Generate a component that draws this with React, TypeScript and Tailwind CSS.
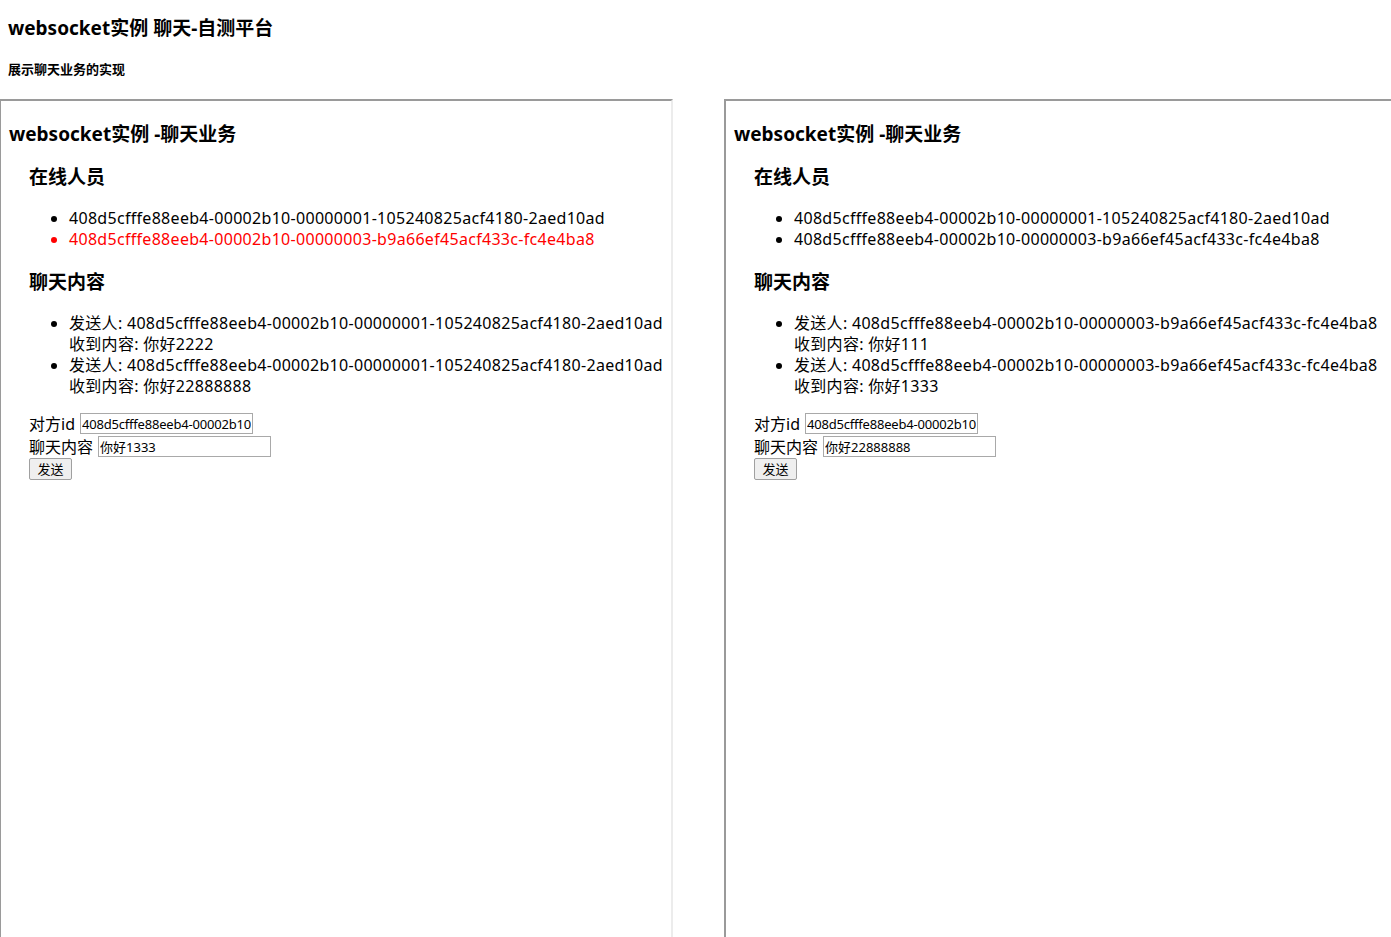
import React from 'react'

type Msg = { from: string; text: string }

interface PanelProps {
  online: { id: string; self?: boolean }[]
  messages: Msg[]
  targetId: string
  draft: string
}

const ID1 = '408d5cfffe88eeb4-00002b10-00000001-105240825acf4180-2aed10ad'
const ID3 = '408d5cfffe88eeb4-00002b10-00000003-b9a66ef45acf433c-fc4e4ba8'

function ChatPanel({ online, messages, targetId, draft }: PanelProps) {
  return (
    <div className="w-[674px] h-[860px] shrink-0 border-2 border-t-[#9a9a9a] border-l-[#9a9a9a] border-r-[#ececec] border-b-[#ececec] bg-white overflow-hidden">
      <div className="pl-[8px] pt-[21px]">
        <h3 className="text-[19px] leading-[25px] font-bold">websocket实例 -聊天业务</h3>
        <div className="pl-[20px]">
          {/* 在线人员 */}
          <h3 className="mt-[18px] text-[19px] leading-[25px] font-bold">在线人员</h3>
          <ul className="mt-[18px] list-disc pl-[40px] text-[16px] leading-[21px] tracking-[0.3px] whitespace-nowrap">
            {online.map((u) => (
              <li key={u.id} className={u.self ? 'text-[#ff0000]' : ''}>
                {u.id}
              </li>
            ))}
          </ul>

          {/* 聊天内容 */}
          <h3 className="mt-[20px] text-[19px] leading-[25px] font-bold">聊天内容</h3>
          <ul className="mt-[18px] list-disc pl-[40px] text-[16px] leading-[21px] tracking-[0.3px] whitespace-nowrap">
            {messages.map((m, i) => (
              <li key={i}>
                发送人: {m.from}
                <br />
                收到内容: {m.text}
              </li>
            ))}
          </ul>

          <div className="mt-[15px] text-[16px]">
            <div className="flex items-center h-[23px]">
              <span>对方id</span>
              <input
                readOnly
                value={targetId}
                className="ml-[5px] w-[173px] h-[21px] border border-[#a9a9a9] px-[1px] text-[13px] tracking-[-0.2px] outline-none"
              />
            </div>
            <div className="flex items-center h-[23px]">
              <span>聊天内容</span>
              <input
                readOnly
                value={draft}
                className="ml-[5px] w-[173px] h-[21px] border border-[#a9a9a9] px-[1px] text-[13px] outline-none"
              />
            </div>
            <button className="block w-[43px] h-[22px] border border-[#a0a0a0] rounded-[2px] bg-[#efefef] text-[13px] leading-none">
              发送
            </button>
          </div>
        </div>
      </div>
    </div>
  )
}

export default function App() {
  return (
    <div
      className="w-[1391px] h-[937px] overflow-hidden bg-white text-black"
      style={{ fontFamily: '"Noto Sans", "Noto Sans CJK SC", sans-serif' }}
    >
      <div className="px-[8px] pt-[16px]">
        <h2 className="text-[19px] leading-[25px] font-bold">websocket实例 聊天-自测平台</h2>
        <h5 className="mt-[20px] text-[13px] leading-[17px] font-bold">展示聊天业务的实现</h5>
      </div>

      <div className="mt-[21px] -ml-[1px] flex gap-[51px]">
        <ChatPanel
          online={[{ id: ID1 }, { id: ID3, self: true }]}
          messages={[
            { from: ID1, text: '你好2222' },
            { from: ID1, text: '你好22888888' },
          ]}
          targetId={ID3}
          draft="你好1333"
        />
        <ChatPanel
          online={[{ id: ID1 }, { id: ID3 }]}
          messages={[
            { from: ID3, text: '你好111' },
            { from: ID3, text: '你好1333' },
          ]}
          targetId={ID1}
          draft="你好22888888"
        />
      </div>
    </div>
  )
}
